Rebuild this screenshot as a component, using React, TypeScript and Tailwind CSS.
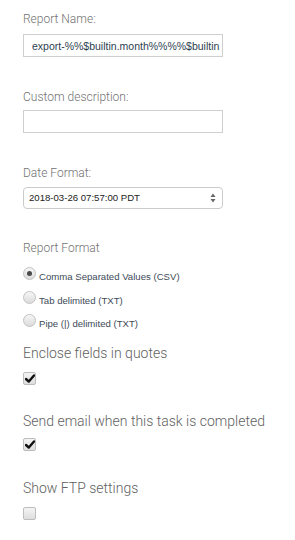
import React from 'react';

const labelCls = "block text-[12px] leading-[16px] font-light text-[#727272]";
const bigLabelCls = "block text-[14px] leading-[20px] font-light text-[#616161]";

const Check = ({ checked }: { checked: boolean }) => (
  <div className="w-[13px] h-[13px] rounded-[2px] border border-[#bdbdbd] bg-gradient-to-b from-[#f4f4f4] to-[#dedede] flex items-center justify-center">
    {checked && (
      <svg width="10" height="9" viewBox="0 0 10 9">
        <path d="M1 5 L3.8 7.6 L9 1.4" fill="none" stroke="#111" strokeWidth="2.4" strokeLinecap="round" strokeLinejoin="round" />
      </svg>
    )}
  </div>
);

const Radio = ({ checked, label }: { checked?: boolean; label: string }) => (
  <div className="flex items-start h-[23.5px]">
    <div className="w-[13px] h-[13px] rounded-full border border-[#c2c2c2] bg-gradient-to-b from-[#f6f6f6] to-[#dcdcdc] flex items-center justify-center shrink-0">
      {checked && <div className="w-[5px] h-[5px] rounded-full bg-[#4a4a4a]" />}
    </div>
    <span className="ml-[3px] mt-[3px] text-[9.6px] leading-[14px] text-[#3d4a57]" style={{ fontFamily: '"Liberation Sans", Arial, sans-serif' }}>
      {label}
    </span>
  </div>
);

export default function App() {
  return (
    <div className="w-[295px] h-[540px] bg-white pl-[23px] pt-[11px]" style={{ fontFamily: 'Roboto, "Liberation Sans", sans-serif' }}>
      {/* Report name */}
      <label className={labelCls}>Report Name:</label>
      <input
        readOnly
        value="export-%%$builtin.month%%%%$builtin.date%%"
        className="block mt-[7px] w-[200px] h-[23px] border border-[#cfcfcf] pl-[8px] pr-[2px] text-[10.5px] text-[#2c3e50] outline-none"
        style={{ fontFamily: '"Liberation Sans", Arial, sans-serif' }}
      />

      {/* Custom description */}
      <label className={`${labelCls} mt-[32px]`}>Custom description:</label>
      <input readOnly className="block mt-[5px] w-[200px] h-[23px] border border-[#cfcfcf] outline-none" />

      {/* Date format */}
      <label className={`${labelCls} mt-[32px]`}>Date Format:</label>
      <div className="mt-[6px] w-[200px] h-[22px] border border-[#cbcbcb] rounded-[4px] flex items-center justify-between pl-[5px] pr-[6px]">
        <span className="text-[9.6px] text-[#222]" style={{ fontFamily: '"Liberation Sans", Arial, sans-serif' }}>
          2018-03-26 07:57:00 PDT
        </span>
        <svg width="6" height="10" viewBox="0 0 6 10">
          <path d="M3 0.5 L5.5 4 L0.5 4 Z" fill="#666" />
          <path d="M3 9.5 L5.5 6 L0.5 6 Z" fill="#666" />
        </svg>
      </div>

      {/* Report format */}
      <label className={`${labelCls} mt-[31px]`}>Report Format</label>
      <div className="mt-[11px]">
        <Radio checked label="Comma Separated Values (CSV)" />
        <Radio label="Tab delimited (TXT)" />
        <Radio label="Pipe (|) delimited (TXT)" />
      </div>

      {/* Options */}
      <label className={`${bigLabelCls} mt-[5px]`}>Enclose fields in quotes</label>
      <div className="mt-[9px]">
        <Check checked />
      </div>

      <label className={`${bigLabelCls} mt-[26px]`}>Send email when this task is completed</label>
      <div className="mt-[7px]">
        <Check checked />
      </div>

      <label className={`${bigLabelCls} mt-[27px]`}>Show FTP settings</label>
      <div className="mt-[9px]">
        <Check checked={false} />
      </div>
    </div>
  );
}
